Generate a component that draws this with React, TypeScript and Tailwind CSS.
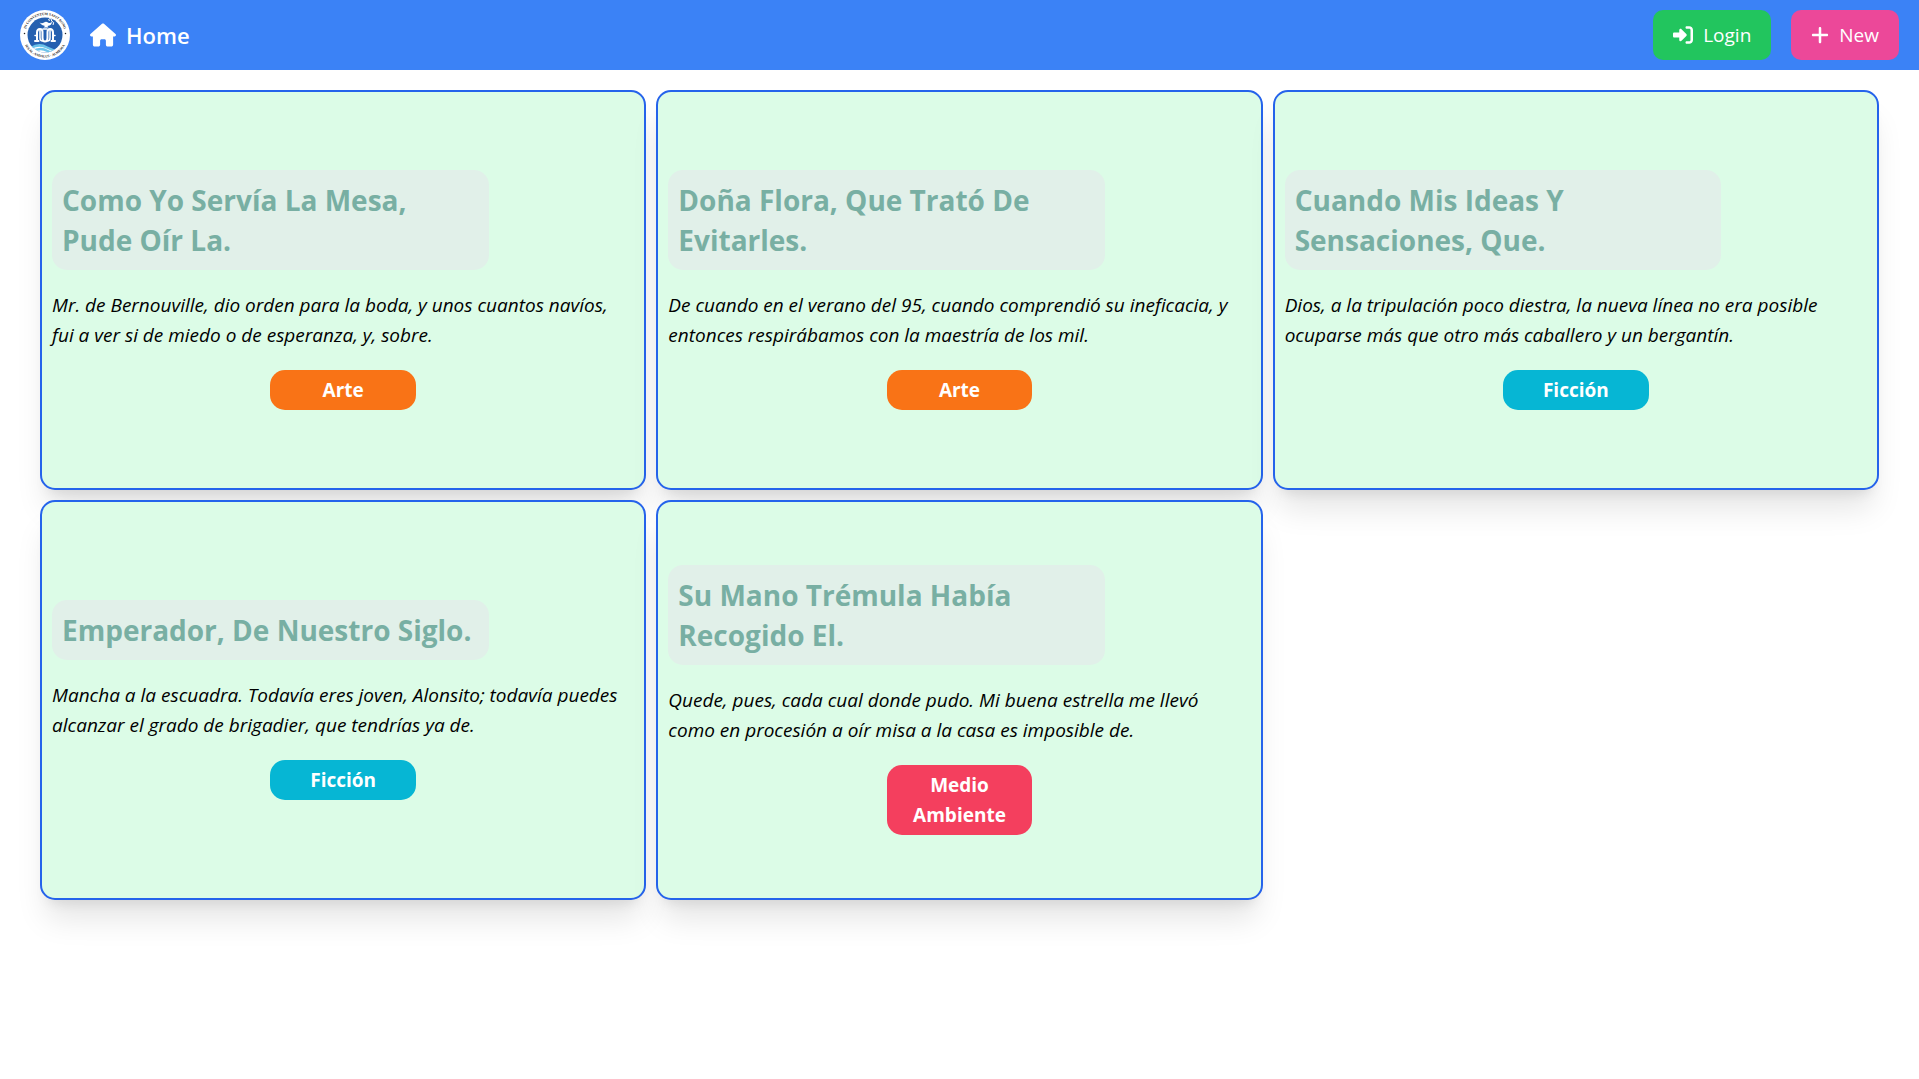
import { FaHouse, FaRightToBracket, FaPlus } from "react-icons/fa6";

type Post = { title: string; body: string; category: string };

const categoryColor: Record<string, string> = {
  Arte: "bg-[#f97316]",
  Ficción: "bg-[#06b6d4]",
  "Medio Ambiente": "bg-[#f43f5e]",
};

const posts: Post[] = [
  {
    title: "Como Yo Servía La Mesa, Pude Oír La.",
    body: "Mr. de Bernouville, dio orden para la boda, y unos cuantos navíos, fui a ver si de miedo o de esperanza, y, sobre.",
    category: "Arte",
  },
  {
    title: "Doña Flora, Que Trató De Evitarles.",
    body: "De cuando en el verano del 95, cuando comprendió su ineficacia, y entonces respirábamos con la maestría de los mil.",
    category: "Arte",
  },
  {
    title: "Cuando Mis Ideas Y Sensaciones, Que.",
    body: "Dios, a la tripulación poco diestra, la nueva línea no era posible ocuparse más que otro más caballero y un bergantín.",
    category: "Ficción",
  },
  {
    title: "Emperador, De Nuestro Siglo.",
    body: "Mancha a la escuadra. Todavía eres joven, Alonsito; todavía puedes alcanzar el grado de brigadier, que tendrías ya de.",
    category: "Ficción",
  },
  {
    title: "Su Mano Trémula Había Recogido El.",
    body: "Quede, pues, cada cual donde pudo. Mi buena estrella me llevó como en procesión a oír misa a la casa es imposible de.",
    category: "Medio Ambiente",
  },
];

function Logo() {
  return (
    <svg viewBox="0 0 100 100" className="size-[50px]" role="img" aria-label="IES Al-Ándalus">
      <defs>
        <path id="ring-top" d="M 10 50 A 40 40 0 0 1 90 50" />
        <path id="ring-bottom" d="M 5 50 A 45 45 0 0 0 95 50" />
        <clipPath id="disc">
          <circle cx="50" cy="50" r="35" />
        </clipPath>
      </defs>
      <circle cx="50" cy="50" r="50" fill="#fff" />
      <circle cx="50" cy="50" r="35" fill="#2560b0" />
      <g clipPath="url(#disc)" fill="none">
        <path d="M20 77 Q38 65 54 74 T84 78 L84 96 H20Z" fill="#fff" />
        <path d="M22 76 Q38 66 54 75 T84 79" stroke="#6cc3ea" strokeWidth="5" />
        <path d="M24 84 Q40 73 55 82 T82 87" stroke="#6cc3ea" strokeWidth="5" />
      </g>
      <g fill="none" stroke="#fff" strokeWidth="4" strokeLinecap="round" strokeLinejoin="round">
        <path d="M30 62 H37 M34 62 V45 Q34 38 40 38 Q45 38 45 44 V56 Q45 63 50 63 Q55 63 55 56 V44 Q55 38 60 38 Q66 38 66 45 V62 M63 62 H70" />
        <path d="M40 40 V56 Q40 62 45 62 M60 40 V56 Q60 62 55 62" strokeWidth="3" />
        <path d="M46 38 H54 M30 51 H34 M66 51 H70" strokeWidth="3" />
      </g>
      <path d="M39 25 Q44 28 48 25 Q52 22 56 25 Q60 28 64 23 Q64 31 55 32 L57 35 H47 L50 32 Q43 31 39 25Z" fill="#fff" />
      <path d="M59 22 Q55 18 60 17 Q65 18 63 22 Q70 24 66 30" fill="none" stroke="#fff" strokeWidth="2" />
      <g fontFamily="'Liberation Serif', serif" fontWeight="700" fontSize="7" fill="#222">
        <text textAnchor="middle">
          <textPath href="#ring-top" startOffset="50%">IN CONVENTUM SAPIT BONO</textPath>
        </text>
        <text textAnchor="middle">
          <textPath href="#ring-bottom" startOffset="50%">IES AL-ANDALUS · ALMERIA</textPath>
        </text>
      </g>
      <circle cx="9" cy="47" r="1.5" fill="#222" />
      <circle cx="91" cy="47" r="1.5" fill="#222" />
    </svg>
  );
}

function PostCard({ title, body, category }: Post) {
  return (
    <article className="flex min-h-[400px] flex-col justify-center rounded-[15px] border-2 border-[#2563eb] bg-[#dcfce7] p-2.5 shadow-[0_25px_31px_-6px_rgb(0_0_0/0.1),0_10px_13px_-8px_rgb(0_0_0/0.1)]">
      <h2 className="w-3/4 rounded-[15px] bg-[#e1f0e9] p-2.5 text-[28px] leading-10 font-bold text-[#78afa3]">
        {title}
      </h2>
      <p className="my-5 pr-2.5 text-[19px] leading-[30px] text-black italic">{body}</p>
      <span
        className={`w-1/4 self-center rounded-[15px] px-5 py-[5px] text-center text-[19px] leading-[30px] font-bold text-white ${categoryColor[category]}`}
      >
        {category}
      </span>
    </article>
  );
}

export default function App() {
  return (
    <div className="min-h-screen bg-white font-['Open_Sans',sans-serif]">
      <header className="flex items-center justify-between bg-[#3b82f6] px-5 py-2.5 text-white">
        <nav className="flex items-center gap-5">
          <Logo />
          <a href="#" className="flex items-center gap-2.5 text-[22px] leading-[35px] font-semibold">
            <FaHouse className="h-6 w-[26px]" aria-hidden />
            Home
          </a>
        </nav>
        <div className="flex gap-5">
          <button type="button" className="flex items-center gap-2.5 rounded-[10px] bg-[#22c55e] px-5 py-2.5 text-[19px] leading-[30px]">
            <FaRightToBracket className="size-5" aria-hidden />
            Login
          </button>
          <button type="button" className="flex items-center gap-2.5 rounded-[10px] bg-[#ec4899] px-5 py-2.5 text-[19px] leading-[30px]">
            <FaPlus className="h-5 w-[18px]" aria-hidden />
            New
          </button>
        </div>
      </header>
      <main className="grid grid-cols-1 gap-2.5 px-10 py-5 md:grid-cols-2 lg:grid-cols-3">
        {posts.map((post) => (
          <PostCard key={post.title} {...post} />
        ))}
      </main>
    </div>
  );
}
